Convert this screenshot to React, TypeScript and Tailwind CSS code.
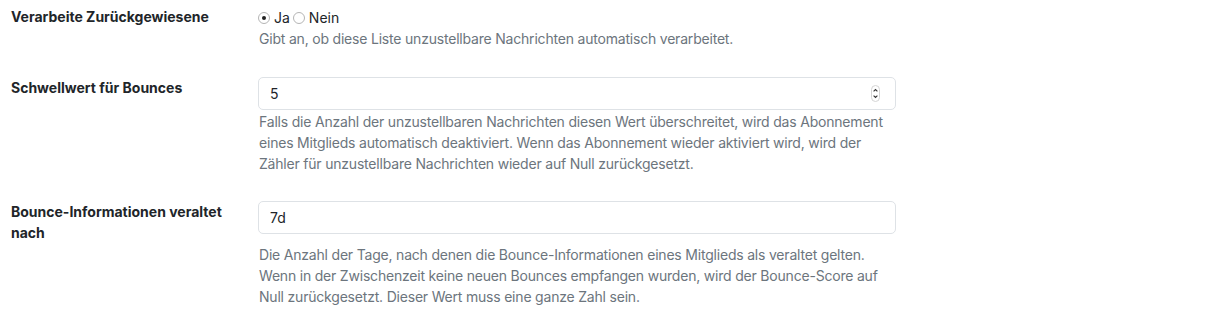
import { FC, ReactNode } from "react";

const font = { fontFamily: "Inter, 'Noto Sans', sans-serif" };

type RowProps = {
    label: ReactNode;
    children: ReactNode;
    className?: string;
};

const Row: FC<RowProps> = ({ label, children, className = "" }) => (
    <div className={`flex ${className}`}>
        <div className="w-[258px] shrink-0 pl-[11px] pr-[24px] text-[14px] leading-[21px] font-bold text-[#212529]">
            {label}
        </div>
        <div className="w-[638px] shrink-0">{children}</div>
    </div>
);

const Radio: FC<{ checked?: boolean; label: string }> = ({ checked, label }) => (
    <label className="inline-flex items-center gap-[4px] text-[14px] leading-[21px] text-[#212529]">
        <span className="flex items-center justify-center w-[12px] h-[12px] rounded-full border border-[#b5b5b5] bg-white">
            {checked && <span className="w-[4px] h-[4px] rounded-full bg-[#222]" />}
        </span>
        {label}
    </label>
);

const Spinner = () => (
    <svg width="9" height="17" viewBox="0 0 9 17" className="shrink-0">
        <rect x="0.5" y="0.5" width="8" height="16" rx="4" fill="#fff" stroke="#d4d4d4" />
        <path d="M2.6 6.4 L4.5 4.5 L6.4 6.4" fill="none" stroke="#333" strokeWidth="1.1" />
        <path d="M2.6 10.6 L4.5 12.5 L6.4 10.6" fill="none" stroke="#333" strokeWidth="1.1" />
    </svg>
);

const Help: FC<{ children: ReactNode; className?: string }> = ({ children, className = "" }) => (
    <p className={`text-[14px] leading-[21px] tracking-[-0.2px] text-[#6c757d] pl-[1px] ${className}`}>{children}</p>
);

export default function App() {
    return (
        <div className="w-[1215px] h-[313px] bg-white pt-[6px]" style={font}>
            <Row label="Verarbeite Zurückgewiesene" className="mb-[27px]">
                <div className="flex items-center gap-[3px] pt-[1px]">
                    <Radio checked label="Ja" />
                    <Radio label="Nein" />
                </div>
                <Help>Gibt an, ob diese Liste unzustellbare Nachrichten automatisch verarbeitet.</Help>
            </Row>

            <Row label="Schwellwert für Bounces" className="mb-[27px] pt-[1px]">
                <div className="flex items-center justify-between h-[33px] rounded-[5px] border border-[#dee2e6] pl-[11px] pr-[15px] text-[14px] text-[#212529]">
                    <span>5</span>
                    <Spinner />
                </div>
                <Help className="mt-[1px]">
                    Falls die Anzahl der unzustellbaren Nachrichten diesen Wert überschreitet, wird das Abonnement
                    eines Mitglieds automatisch deaktiviert. Wenn das Abonnement wieder aktiviert wird, wird der
                    Zähler für unzustellbare Nachrichten wieder auf Null zurückgesetzt.
                </Help>
            </Row>

            <Row label="Bounce-Informationen veraltet nach">
                <div className="flex items-center h-[33px] rounded-[5px] border border-[#dee2e6] pl-[11px] text-[14px] text-[#212529]">
                    7d
                </div>
                <Help className="mt-[10px]">
                    Die Anzahl der Tage, nach denen die Bounce-Informationen eines Mitglieds als veraltet gelten.
                    Wenn in der Zwischenzeit keine neuen Bounces empfangen wurden, wird der Bounce-Score auf
                    Null zurückgesetzt. Dieser Wert muss eine ganze Zahl sein.
                </Help>
            </Row>
        </div>
    );
}
